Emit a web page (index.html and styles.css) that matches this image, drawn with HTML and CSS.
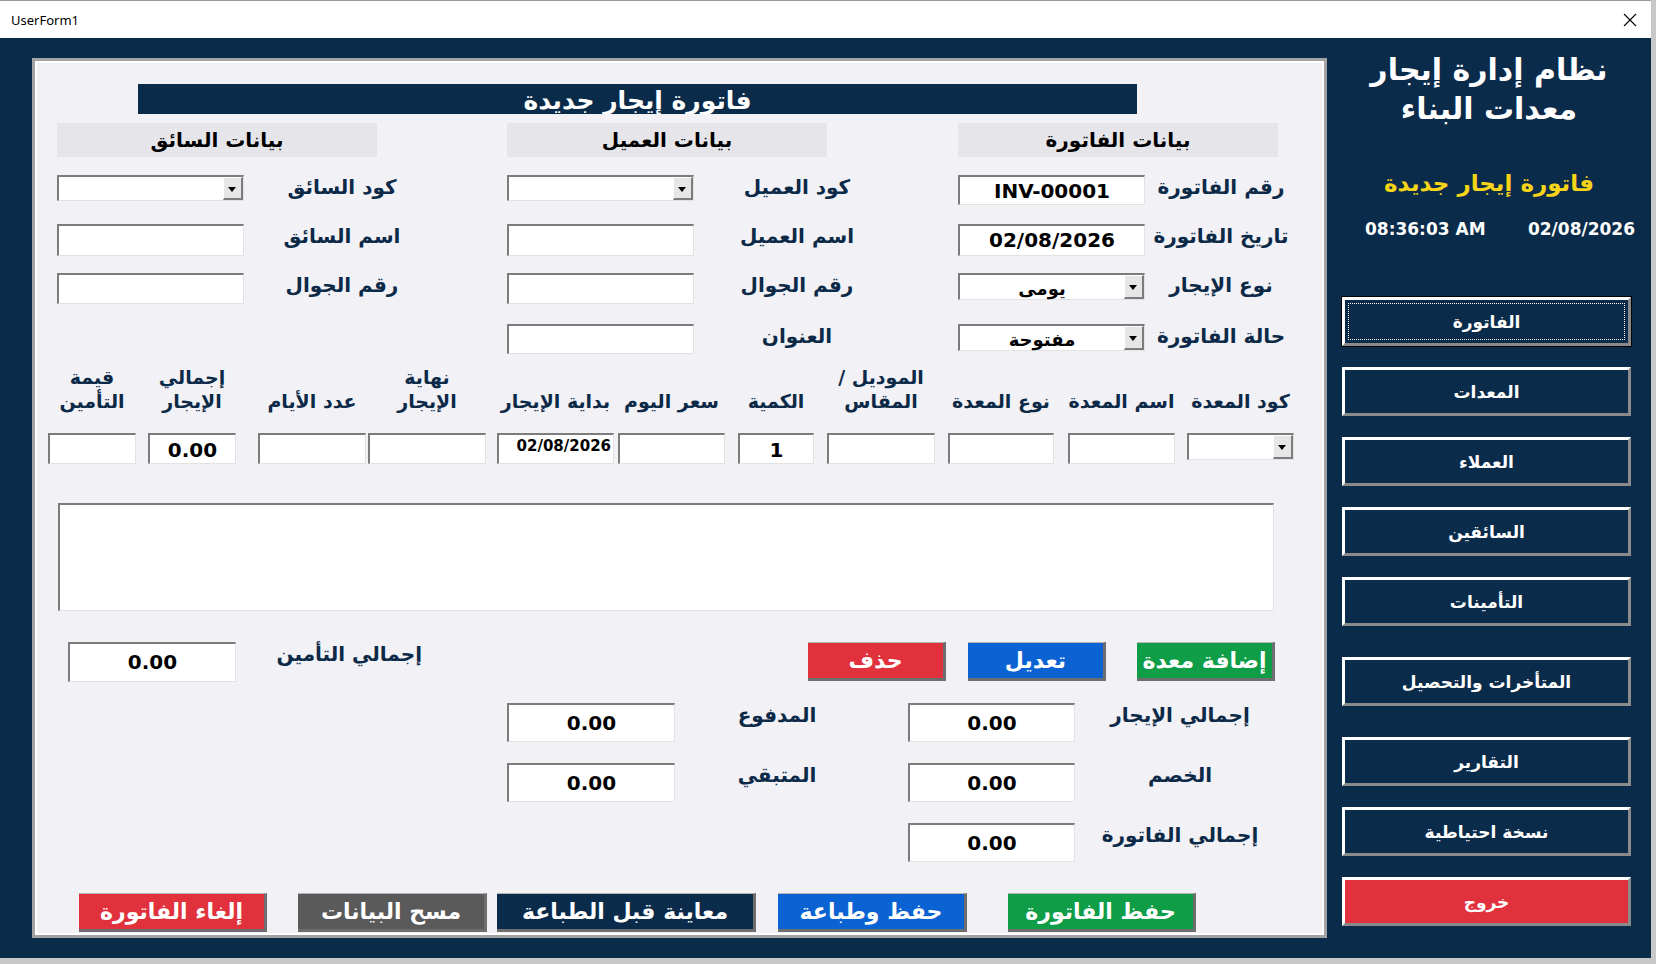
FILE: index.html
```html
<!DOCTYPE html>
<html lang="ar">
<head>
  <meta charset="UTF-8" />
  <title>UserForm1</title>
  <link rel="stylesheet" href="styles.css">
</head>
<body>
  <div class="window">
    <div class="titlebar">
      <span class="title">UserForm1</span>
      <svg class="close" width="14" height="14" viewBox="0 0 14 14"><path d="M1 1 L13 13 M13 1 L1 13" stroke="#000" stroke-width="1.1" fill="none"/></svg>
    </div>
    <div class="frame">
      <div class="panel">
        <div class="heading">فاتورة إيجار جديدة</div>

        <div class="groups">
          <div class="group g-driver">
            <div class="sec">بيانات السائق</div>
            <div class="row">
              <div class="box combo h26"><span class="val"></span><span class="drop"></span></div>
              <div class="lbl">كود السائق</div>
            </div>
            <div class="row">
              <div class="box h32"></div>
              <div class="lbl">اسم السائق</div>
            </div>
            <div class="row">
              <div class="box h31"></div>
              <div class="lbl">رقم الجوال</div>
            </div>
          </div>

          <div class="group g-client">
            <div class="sec">بيانات العميل</div>
            <div class="row">
              <div class="box combo h26"><span class="val"></span><span class="drop"></span></div>
              <div class="lbl">كود العميل</div>
            </div>
            <div class="row">
              <div class="box h32"></div>
              <div class="lbl">اسم العميل</div>
            </div>
            <div class="row">
              <div class="box h31"></div>
              <div class="lbl">رقم الجوال</div>
            </div>
            <div class="row last">
              <div class="box h30"></div>
              <div class="lbl">العنوان</div>
            </div>
          </div>

          <div class="group g-invoice">
            <div class="sec">بيانات الفاتورة</div>
            <div class="row">
              <div class="box h30 val-big">INV-00001</div>
              <div class="lbl">رقم الفاتورة</div>
            </div>
            <div class="row">
              <div class="box h32 val-big">02/08/2026</div>
              <div class="lbl">تاريخ الفاتورة</div>
            </div>
            <div class="row">
              <div class="box combo h27"><span class="val">يومى</span><span class="drop"></span></div>
              <div class="lbl">نوع الإيجار</div>
            </div>
            <div class="row last">
              <div class="box combo h27"><span class="val">مفتوحة</span><span class="drop"></span></div>
              <div class="lbl">حالة الفاتورة</div>
            </div>
          </div>
        </div>

        <div class="equip">
          <div class="cell c-ins"><div class="head">قيمة<br>التأمين</div><div class="box h31"></div></div>
          <div class="cell c-tot"><div class="head">إجمالي<br>الإيجار</div><div class="box h31 val-mid">0.00</div></div>
          <div class="cell c-days"><div class="head">عدد الأيام</div><div class="box h31"></div></div>
          <div class="cell c-end"><div class="head">نهاية<br>الإيجار</div><div class="box h31"></div></div>
          <div class="cell c-start"><div class="head">بداية الإيجار</div><div class="box h31 val-small">02/08/2026</div></div>
          <div class="cell c-price"><div class="head">سعر اليوم</div><div class="box h31"></div></div>
          <div class="cell c-qty"><div class="head">الكمية</div><div class="box h31 val-mid">1</div></div>
          <div class="cell c-model"><div class="head">الموديل /<br>المقاس</div><div class="box h31"></div></div>
          <div class="cell c-type"><div class="head">نوع المعدة</div><div class="box h31"></div></div>
          <div class="cell c-name"><div class="head">اسم المعدة</div><div class="box h31"></div></div>
          <div class="cell c-code"><div class="head">كود المعدة</div><div class="box combo h27"><span class="val"></span><span class="drop"></span></div></div>
        </div>

        <div class="box listbox"></div>

        <div class="line line-a">
          <div class="box tbox ins-total val-mid">0.00</div>
          <div class="lbl sum-lbl ins-lbl">إجمالي التأمين</div>
          <button class="btn act red b-del">حذف</button>
          <button class="btn act blue b-edit">تعديل</button>
          <button class="btn act green b-add">إضافة معدة</button>
        </div>
        <div class="line">
          <div class="box tbox paid val-mid">0.00</div>
          <div class="lbl sum-lbl mid-lbl">المدفوع</div>
          <div class="box tbox totals val-mid">0.00</div>
          <div class="lbl sum-lbl right-lbl">إجمالي الإيجار</div>
        </div>
        <div class="line">
          <div class="box tbox paid val-mid">0.00</div>
          <div class="lbl sum-lbl mid-lbl">المتبقي</div>
          <div class="box tbox totals val-mid">0.00</div>
          <div class="lbl sum-lbl right-lbl">الخصم</div>
        </div>
        <div class="line">
          <div class="box tbox totals only val-mid">0.00</div>
          <div class="lbl sum-lbl right-lbl">إجمالي الفاتورة</div>
        </div>

        <div class="bottom">
          <button class="btn big red b-cancel">إلغاء الفاتورة</button>
          <button class="btn big grey b-clear">مسح البيانات</button>
          <button class="btn big navy b-preview">معاينة قبل الطباعة</button>
          <button class="btn big blue b-print">حفظ وطباعة</button>
          <button class="btn big green b-save">حفظ الفاتورة</button>
        </div>
      </div>

      <aside class="side">
        <div class="app-title">نظام إدارة إيجار<br>معدات البناء</div>
        <div class="sub-title">فاتورة إيجار جديدة</div>
        <div class="clock">
          <span>08:36:03 AM</span>
          <span>02/08/2026</span>
        </div>
        <div class="menu">
          <button class="mbtn focus"><span>الفاتورة</span></button>
          <button class="mbtn">المعدات</button>
          <button class="mbtn">العملاء</button>
          <button class="mbtn">السائقين</button>
          <button class="mbtn">التأمينات</button>
          <button class="mbtn wide">المتأخرات والتحصيل</button>
          <button class="mbtn wide">التقارير</button>
          <button class="mbtn">نسخة احتياطية</button>
          <button class="mbtn exit">خروج</button>
        </div>
      </aside>
    </div>
  </div>
</body>
</html>
```

FILE: styles.css
```css
* {
  margin: 0;
  padding: 0;
  box-sizing: border-box;
}
body {
  width: 1656px;
  height: 964px;
  overflow: hidden;
  background: #c8c8c8;
  font-family: "DejaVu Sans", sans-serif;
}
.window {
  width: 1651px;
  height: 958px;
  background: #0b2b4b;
}
.titlebar {
  height: 38px;
  background: #fff;
  border-top: 1px solid #9a9a9a;
  display: flex;
  align-items: center;
  justify-content: space-between;
  padding: 0 14px 0 11px;
}
.title {
  font-family: "Noto Sans", "Liberation Sans", sans-serif;
  font-size: 13px;
  color: #000;
}
.frame {
  display: flex;
  height: 920px;
}

/* main panel */
.panel {
  margin: 20px 0 0 32px;
  width: 1295px;
  height: 880px;
  padding: 2px;
  background: #f1f1f6;
  border: 3px solid #a3a3a3;
  box-shadow: inset 0 0 0 2px #fff;
}
.heading {
  margin: 21px 0 0 101px;
  width: 999px;
  height: 30px;
  overflow: hidden;
  background: #0b2b4b;
  color: #fff;
  font-weight: bold;
  font-size: 25px;
  line-height: 30px;
  padding-top: 2px;
  text-align: center;
  direction: rtl;
}
.groups {
  display: flex;
  align-items: flex-start;
  margin-top: 9px;
}
.group {
  width: 320px;
  flex: none;
}
.g-driver { margin-left: 20px; }
.g-client { margin-left: 130px; }
.g-invoice { margin-left: 131px; }
.sec {
  width: 320px;
  height: 34px;
  background: #e5e5ea;
  font-weight: bold;
  font-size: 20px;
  line-height: 34px;
  text-align: center;
  color: #000;
  direction: rtl;
  margin-bottom: 18px;
}
.row {
  display: flex;
  align-items: flex-start;
  height: 49px;
}
.row.last {
  height: 30px;
  margin-top: 2px;
}
.row .box {
  width: 187px;
  flex: none;
}
.lbl {
  flex: none;
  font-weight: bold;
  font-size: 20px;
  line-height: 24px;
  color: #0c2a47;
  text-align: center;
  white-space: nowrap;
  direction: rtl;
}
.g-driver .lbl { width: 196px; }
.g-client .lbl { width: 206px; }
.g-invoice .lbl { width: 152px; }

/* sunken text boxes */
.box {
  background: #fff;
  border-top: 2px solid #7c7c7c;
  border-left: 2px solid #7c7c7c;
  border-right: 1px solid #e2e2e2;
  border-bottom: 1px solid #e2e2e2;
  color: #000;
  font-weight: bold;
  text-align: center;
}
.h26 { height: 26px; }
.h27 { height: 27px; }
.h30 { height: 30px; }
.h31 { height: 31px; }
.h32 { height: 32px; }
.val-big {
  font-size: 20px;
  line-height: 29px;
}
.val-mid {
  font-size: 20px;
  line-height: 30px;
}
.val-small {
  font-size: 15px;
  line-height: 22px;
  text-align: right;
  padding-right: 2px;
}
.combo {
  display: flex;
}
.combo .val {
  flex: 1;
  font-size: 18px;
  line-height: 27px;
  direction: rtl;
}
.drop {
  width: 20px;
  flex: none;
  background: #e6e6e6;
  border-top: 1px solid #fff;
  border-left: 1px solid #fff;
  border-right: 2px solid #7c7c7c;
  border-bottom: 2px solid #7c7c7c;
  position: relative;
}
.drop::after {
  content: "";
  position: absolute;
  left: 4px;
  top: 9px;
  border-left: 4px solid transparent;
  border-right: 4px solid transparent;
  border-top: 5px solid #000;
}

/* equipment row */
.equip {
  display: flex;
  align-items: flex-start;
  margin-top: 9px;
}
.cell {
  display: flex;
  flex-direction: column;
  align-items: center;
  flex: none;
}
.cell .box {
  width: 100%;
  margin-top: 20px;
}
.head {
  height: 50px;
  display: flex;
  align-items: flex-end;
  justify-content: center;
  text-align: center;
  font-weight: bold;
  font-size: 19px;
  line-height: 24px;
  color: #0c2a47;
  white-space: nowrap;
  direction: rtl;
}
.c-ins { width: 88px; margin-left: 11px; }
.c-tot { width: 88px; margin-left: 12px; }
.c-days { width: 108px; margin-left: 22px; }
.c-end { width: 118px; margin-left: 2px; }
.c-start { width: 117px; margin-left: 11px; }
.c-price { width: 107px; margin-left: 4px; }
.c-qty { width: 76px; margin-left: 13px; }
.c-model { width: 108px; margin-left: 13px; }
.c-type { width: 106px; margin-left: 13px; }
.c-name { width: 107px; margin-left: 14px; }
.c-code { width: 107px; margin-left: 12px; }

.listbox {
  margin: 39px 0 0 21px;
  width: 1216px;
  height: 108px;
}

/* totals */
.line {
  display: flex;
  align-items: flex-start;
  margin-top: 21px;
}
.line-a {
  margin-top: 31px;
}
.tbox {
  height: 39px;
  flex: none;
  line-height: 36px;
}
.ins-total { width: 168px; margin-left: 31px; height: 40px; }
.ins-lbl { width: 140px; margin-left: 46px; }
.paid { width: 168px; margin-left: 470px; }
.mid-lbl { width: 120px; margin-left: 42px; }
.totals { width: 167px; margin-left: 71px; }
.totals.only { margin-left: 871px; }
.right-lbl { width: 210px; }

.btn {
  font-family: "DejaVu Sans", sans-serif;
  font-weight: bold;
  color: #fff;
  border: none;
  border-top: 1px solid #b5b5b5;
  border-right: 3px solid #6e6e6e;
  border-bottom: 3px solid #6e6e6e;
  direction: rtl;
  flex: none;
}
.act {
  height: 39px;
  width: 138px;
  font-size: 22px;
}
.b-del { margin-left: 386px; }
.b-edit { margin-left: 22px; }
.b-add { margin-left: 31px; }
.red { background: #e1313d; }
.blue { background: #0b63d3; }
.green { background: #0f9d48; }
.grey { background: #5a5a5a; }
.navy { background: #0b2b4b; }

.bottom {
  display: flex;
  margin-top: 31px;
}
.big {
  height: 39px;
  font-size: 22px;
}
.b-cancel { width: 188px; margin-left: 42px; }
.b-clear { width: 189px; margin-left: 31px; }
.b-preview { width: 259px; margin-left: 10px; }
.b-print { width: 189px; margin-left: 22px; }
.b-save { width: 188px; margin-left: 41px; }

/* sidebar */
.side {
  width: 324px;
  flex: none;
  color: #fff;
  text-align: center;
  direction: rtl;
}
.app-title {
  margin-top: 12px;
  font-weight: bold;
  font-size: 30px;
  line-height: 39px;
}
.sub-title {
  margin-top: 40px;
  color: #f7d417;
  font-weight: bold;
  font-size: 23px;
  line-height: 30px;
}
.clock {
  margin-top: 19px;
  display: flex;
  direction: ltr;
  justify-content: space-between;
  padding: 0 16px 0 38px;
  font-weight: bold;
  font-size: 17px;
  line-height: 24px;
}
.menu {
  margin: 56px 20px 0 15px;
  width: 289px;
  display: flex;
  flex-direction: column;
  gap: 21px;
}
.mbtn {
  height: 49px;
  background: #0b2b4b;
  color: #fff;
  font-family: "DejaVu Sans", sans-serif;
  font-weight: bold;
  font-size: 17px;
  border-top: 3px solid #fff;
  border-left: 3px solid #fff;
  border-right: 3px solid #8a8a8a;
  border-bottom: 3px solid #8a8a8a;
  direction: rtl;
}
.mbtn.wide {
  margin-top: 10px;
}
.mbtn.focus {
  outline: 1px solid #000;
  padding: 3px;
}
.mbtn.focus span {
  display: flex;
  height: 100%;
  align-items: center;
  justify-content: center;
  border: 1px dotted #fff;
}
.mbtn.exit {
  background: #e1313d;
}
```
